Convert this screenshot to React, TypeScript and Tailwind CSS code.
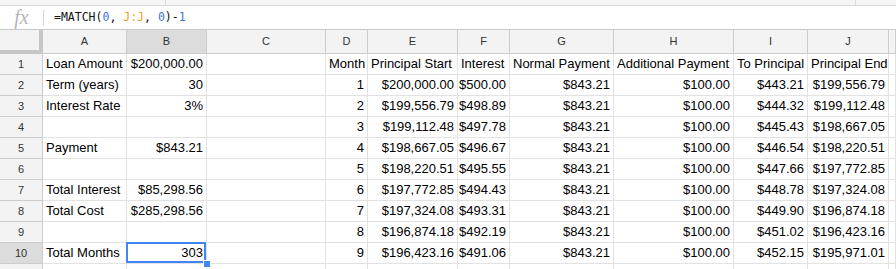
import React from "react";

const letters = ["A", "B", "C", "D", "E", "F", "G", "H", "I", "J", ""];

type Cell = { t: string; r?: boolean };

const L = (t: string): Cell => ({ t });
const R = (t: string): Cell => ({ t, r: true });
const E: Cell = { t: "" };

const rows: Cell[][] = [
  [L("Loan Amount"), R("$200,000.00"), E, L("Month"), L("Principal Start"), L("Interest"), L("Normal Payment"), L("Additional Payment"), L("To Principal"), L("Principal End"), E],
  [L("Term (years)"), R("30"), E, R("1"), R("$200,000.00"), R("$500.00"), R("$843.21"), R("$100.00"), R("$443.21"), R("$199,556.79"), E],
  [L("Interest Rate"), R("3%"), E, R("2"), R("$199,556.79"), R("$498.89"), R("$843.21"), R("$100.00"), R("$444.32"), R("$199,112.48"), E],
  [E, E, E, R("3"), R("$199,112.48"), R("$497.78"), R("$843.21"), R("$100.00"), R("$445.43"), R("$198,667.05"), E],
  [L("Payment"), R("$843.21"), E, R("4"), R("$198,667.05"), R("$496.67"), R("$843.21"), R("$100.00"), R("$446.54"), R("$198,220.51"), E],
  [E, E, E, R("5"), R("$198,220.51"), R("$495.55"), R("$843.21"), R("$100.00"), R("$447.66"), R("$197,772.85"), E],
  [L("Total Interest"), R("$85,298.56"), E, R("6"), R("$197,772.85"), R("$494.43"), R("$843.21"), R("$100.00"), R("$448.78"), R("$197,324.08"), E],
  [L("Total Cost"), R("$285,298.56"), E, R("7"), R("$197,324.08"), R("$493.31"), R("$843.21"), R("$100.00"), R("$449.90"), R("$196,874.18"), E],
  [E, E, E, R("8"), R("$196,874.18"), R("$492.19"), R("$843.21"), R("$100.00"), R("$451.02"), R("$196,423.16"), E],
  [L("Total Months"), R("303"), E, R("9"), R("$196,423.16"), R("$491.06"), R("$843.21"), R("$100.00"), R("$452.15"), R("$195,971.01"), E],
  [E, E, E, E, E, E, E, E, E, E, E],
];

const gridCols = "grid-cols-[43px_84px_80px_119px_42px_90px_52px_104px_120px_74px_81px_1fr]";

export default function App() {
  return (
    <div className="w-[896px] h-[269px] overflow-hidden bg-white font-['Liberation_Sans',Arial,sans-serif] text-black">
      {/* top strip */}
      <div className="relative h-[6px] bg-[#f5f5f5] border-b border-[#d9d9d9]">
        <div className="absolute left-[165px] top-0 h-full border-l border-[#d9d9d9]" />
        <div className="absolute left-[855px] top-0 h-full border-l border-[#d9d9d9]" />
      </div>
      {/* formula bar */}
      <div className="flex items-center h-[24px] border-b border-[#c8c8c8] bg-white">
        <div className="w-[43px] flex justify-center items-center h-full">
          <span className="font-['Liberation_Serif',serif] italic text-[20px] leading-none text-[#b5b5b5] -mt-[2px]">fx</span>
        </div>
        <div className="h-[16px] border-l border-[#d6d6d6]" />
        <div className="pl-[10px] font-['DejaVu_Sans_Mono',monospace] text-[11.5px] leading-none whitespace-pre text-[#111]">
          <span>=MATCH(</span>
          <span className="text-[#3c78d8]">0</span>
          <span>, </span>
          <span className="text-[#f0a030]">J:J</span>
          <span>, </span>
          <span className="text-[#3c78d8]">0</span>
          <span>)-</span>
          <span className="text-[#3c78d8]">1</span>
        </div>
      </div>
      {/* grid */}
      <div className={`grid ${gridCols}`}>
        {/* header row */}
        <div className="h-[24px] bg-[#f3f3f3] border-r-[4px] border-b-[4px] border-[#c6c6c6]" />
        {letters.map((l, i) => (
          <div
            key={"h" + i}
            className={`h-[24px] flex items-center justify-center text-[11px] text-[#333] border-r border-b border-[#cccccc] ${
              l === "B" ? "bg-[#dcdcdc]" : "bg-[#f3f3f3]"
            }`}
          >
            {l}
          </div>
        ))}
        {rows.map((row, ri) => (
          <React.Fragment key={"r" + ri}>
            <div
              className={`h-[21px] flex items-center justify-center text-[11px] text-[#333] border-r border-b border-[#cccccc] ${
                ri === 9 ? "bg-[#dcdcdc]" : "bg-[#f3f3f3]"
              }`}
            >
              {ri < 10 ? ri + 1 : ""}
            </div>
            {row.map((c, ci) => {
              const selected = ri === 9 && ci === 1;
              return (
                <div
                  key={"c" + ri + "-" + ci}
                  className={`relative h-[21px] flex items-center whitespace-nowrap text-[13px] border-r border-b border-[#e2e2e2] ${
                    c.r ? "justify-end pr-[3px]" : "justify-start pl-[3px]"
                  } ${selected ? "z-10" : ""}`}
                >
                  {c.t}
                  {selected && (
                    <>
                      <div className="absolute -left-[1px] -top-[1px] w-[calc(100%+1px)] h-[calc(100%+1px)] border-2 border-[#4285f4] pointer-events-none" />
                      <div className="absolute -right-[5px] -bottom-[5px] w-[8px] h-[8px] bg-[#4285f4] border border-white" />
                    </>
                  )}
                </div>
              );
            })}
          </React.Fragment>
        ))}
      </div>
    </div>
  );
}
